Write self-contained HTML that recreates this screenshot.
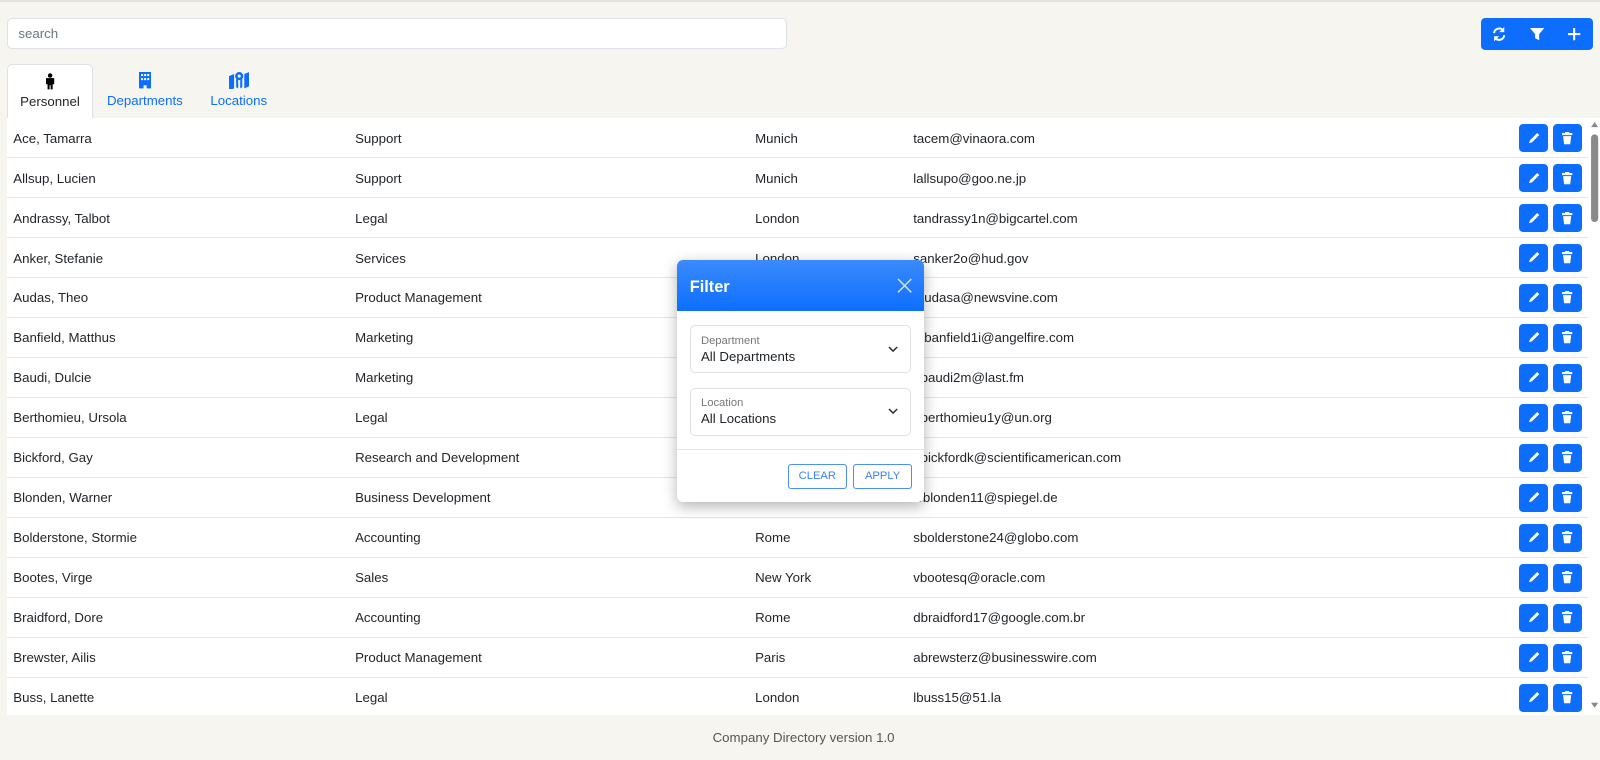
<!DOCTYPE html>
<html><head><meta charset="utf-8"><style>
*{box-sizing:border-box;margin:0;padding:0}
html{zoom:1.0204;background:#f7f5ef;overflow:hidden}
body{width:1568px;height:745px;background:#f7f5ef;font-family:"Liberation Sans",Arial,sans-serif;font-size:13px;color:#212529;position:relative;overflow:hidden;border-top:2px solid #e3e3e0}
.search{position:absolute;left:7px;top:16px;width:764px;height:30px;background:#fff;border:1px solid #dee2e6;border-radius:5px;padding:7px 10px;color:#6c757d;font-size:13px}
.grp{position:absolute;left:1451px;top:16px;width:110px;height:31px;background:#0d6efd;border-radius:4px}
.grp svg{position:absolute;top:8px}
.tab{position:absolute;top:61px;height:54px;text-align:center;font-size:13px;color:#0d6efd}
.tab svg{display:block;margin:8px auto 4px}
.tab.act{background:#fff;border:1px solid #dee2e6;border-bottom:none;border-radius:5px 5px 0 0;color:#212529}
.table{position:absolute;left:7px;top:114px;width:1549px;height:585px;background:#fff;overflow:hidden}
.row{height:39.2px;border-bottom:1px solid #e3e5e8;position:relative}
.row span{position:absolute;top:12px}
.b{position:absolute;top:6px;width:28px;height:27px;background:#0d6efd;border-radius:4px}
.b svg{position:absolute;left:7px;top:6px}
.sb{position:absolute;left:1556px;top:114px;width:13px;height:585px;background:#fff}
.foot{position:absolute;top:713px;left:0;width:1575px;text-align:center;color:#555;font-size:13px}
.modal{position:absolute;left:663px;top:253px;width:243px;height:237px;background:#fff;border-radius:6px;box-shadow:0 4px 14px rgba(0,0,0,.3);overflow:hidden}
.mh{height:50px;background:linear-gradient(#3a8bfd,#0d6efd);color:#fff;font-weight:bold;font-size:16px;padding:17px 13px}
.sel{position:absolute;left:13px;width:217px;height:47px;border:1px solid #dee2e6;border-radius:5px;padding:8px 10px}
.sel .l{font-size:11px;color:#777}
.sel .v{font-size:13px;margin-top:2px}
.sel svg{position:absolute;right:12px;top:19px}
.mb{position:absolute;top:200px;height:24px;border:1px solid #4d8ff8;border-radius:3px;color:#3b82f6;font-size:11px;text-align:center;line-height:22px}
</style></head><body>
<div class="search">search</div>
<div class="grp">
<svg style="left:10px" width="16" height="16" viewBox="0 0 16 16"><path d="M3 7a5 5 0 0 1 9-2.5M13 9a5 5 0 0 1-9 2.5" fill="none" stroke="#fff" stroke-width="2"/><path d="M13 1v5h-5zM3 15v-5h5z" fill="#fff"/></svg>
<svg style="left:47px" width="16" height="16" viewBox="0 0 16 16"><path d="M1 2h14l-5 6v6l-4-2v-4z" fill="#fff"/></svg>
<svg style="left:84px" width="16" height="16" viewBox="0 0 16 16"><path d="M8 2v12M2 8h12" stroke="#fff" stroke-width="2"/></svg>
</div>
<div class="tab act" style="left:7px;width:84px"><svg width="12" height="16" viewBox="0 0 12 16"><circle cx="6" cy="2.5" r="2.2"/><path d="M2 5h8v6H8.5v5h-2v-4h-1v4h-2v-5H2z"/></svg>Personnel</div>
<div class="tab" style="left:97px;width:90px"><svg width="12" height="16" viewBox="0 0 12 16"><path d="M0 0h12v16H7.5v-3h-3v3H0z" fill="#0d6efd"/><g fill="#fff"><rect x="2" y="2" width="2" height="2"/><rect x="5" y="2" width="2" height="2"/><rect x="8" y="2" width="2" height="2"/><rect x="2" y="6" width="2" height="2"/><rect x="5" y="6" width="2" height="2"/><rect x="8" y="6" width="2" height="2"/></g></svg>Departments</div>
<div class="tab" style="left:199px;width:70px"><svg width="20" height="16" viewBox="0 0 20 16"><path d="M0 4l5-2v14l-5 2zM15 2l5-2v14l-5 2zM7 4l2 1v11l-2-1zM11 5l2-1v11l-2 1z" fill="#0d6efd"/><circle cx="10" cy="4" r="4" fill="#0d6efd"/><circle cx="10" cy="4" r="1.5" fill="#fff"/></svg>Locations</div>
<div class="table" id="t"></div>
<div class="sb"><svg width="13" height="585"><path d="M3 9l3.5-5 3.5 5z" fill="#888"/><rect x="3" y="16" width="7" height="86" rx="3.5" fill="#8a8a8a"/><path d="M3 573l3.5 5 3.5-5z" fill="#888"/></svg></div>
<div class="foot">Company Directory version 1.0</div>
<div class="modal">
<div class="mh">Filter</div>
<svg style="position:absolute;left:216px;top:17px" width="15" height="15"><path d="M1 1l13 13M14 1L1 14" stroke="#cfe0ff" stroke-width="1.5"/></svg>
<div class="sel" style="top:64px"><div class="l">Department</div><div class="v">All Departments</div><svg width="10" height="6"><path d="M1 1l4 4 4-4" fill="none" stroke="#333" stroke-width="1.5"/></svg></div>
<div class="sel" style="top:125px"><div class="l">Location</div><div class="v">All Locations</div><svg width="10" height="6"><path d="M1 1l4 4 4-4" fill="none" stroke="#333" stroke-width="1.5"/></svg></div>
<div style="position:absolute;top:185px;left:0;width:100%;border-top:1px solid #e3e5e8"></div>
<div class="mb" style="left:109px;width:58px">CLEAR</div>
<div class="mb" style="left:173px;width:58px">APPLY</div>
</div>
<script>
var d=[["Ace, Tamarra","Support","Munich","tacem@vinaora.com"],["Allsup, Lucien","Support","Munich","lallsupo@goo.ne.jp"],["Andrassy, Talbot","Legal","London","tandrassy1n@bigcartel.com"],["Anker, Stefanie","Services","London","sanker2o@hud.gov"],["Audas, Theo","Product Management","Paris","taudasa@newsvine.com"],["Banfield, Matthus","Marketing","Paris","mbanfield1i@angelfire.com"],["Baudi, Dulcie","Marketing","Paris","dbaudi2m@last.fm"],["Berthomieu, Ursola","Legal","London","uberthomieu1y@un.org"],["Bickford, Gay","Research and Development","Paris","gbickfordk@scientificamerican.com"],["Blonden, Warner","Business Development","Paris","wblonden11@spiegel.de"],["Bolderstone, Stormie","Accounting","Rome","sbolderstone24@globo.com"],["Bootes, Virge","Sales","New York","vbootesq@oracle.com"],["Braidford, Dore","Accounting","Rome","dbraidford17@google.com.br"],["Brewster, Ailis","Product Management","Paris","abrewsterz@businesswire.com"],["Buss, Lanette","Legal","London","lbuss15@51.la"]];
var pen='<svg width="14" height="14" viewBox="0 0 14 14"><path d="M2 12l1-3 7-7 2 2-7 7z" fill="#fff"/></svg>';
var bin='<svg width="14" height="14" viewBox="0 0 14 14"><path d="M2 2h10v2H2zM5 1h4v1H5zM3 5h8l-1 8H4z" fill="#fff"/></svg>';
var h='';d.forEach(function(r){h+='<div class="row"><span style="left:6px">'+r[0]+'</span><span style="left:341px">'+r[1]+'</span><span style="left:733px">'+r[2]+'</span><span style="left:888px">'+r[3]+'</span><div class="b" style="left:1482px">'+pen+'</div><div class="b" style="left:1515px">'+bin+'</div></div>'});
document.getElementById('t').innerHTML=h;
</script>
</body></html>
